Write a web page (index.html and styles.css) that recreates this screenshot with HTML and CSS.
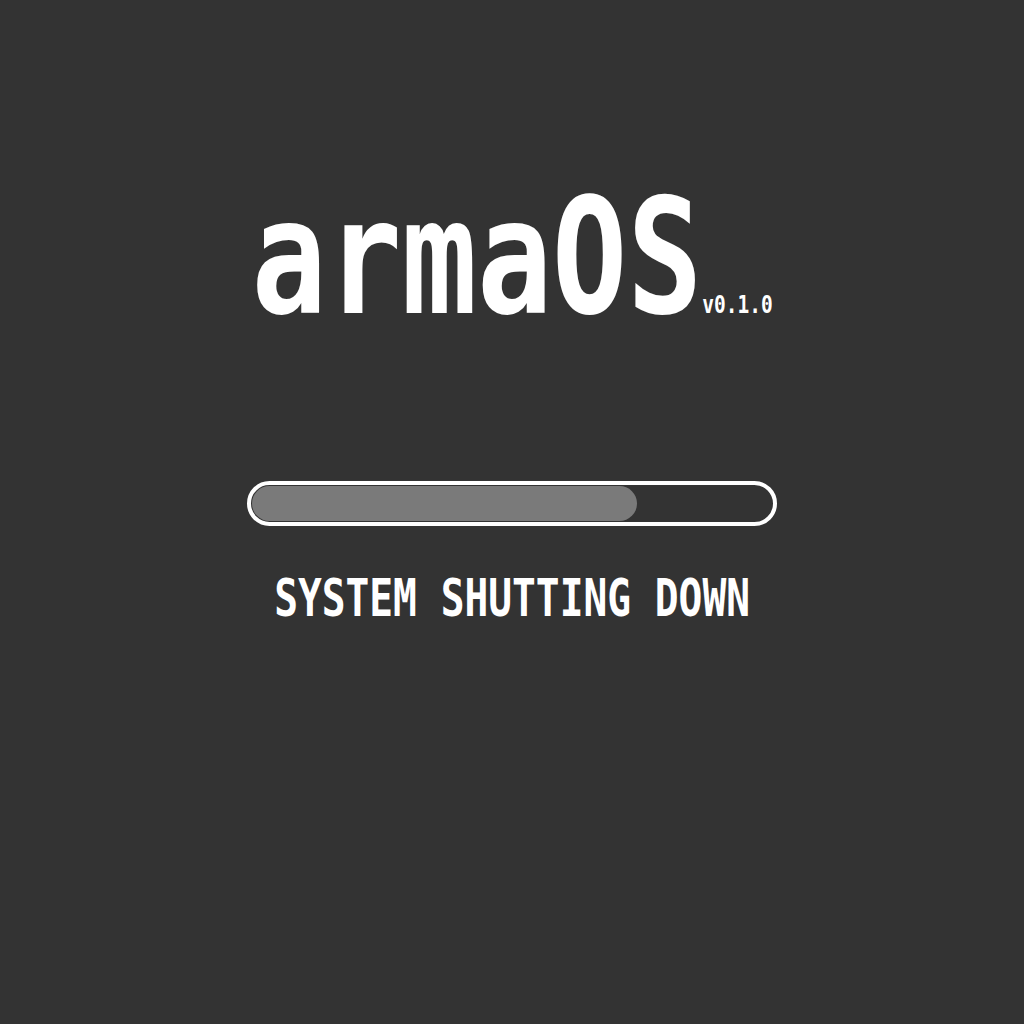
FILE: index.html
```html
<!DOCTYPE html>
<html>
<head>
<meta charset="utf-8">
<link rel="stylesheet" href="styles.css">
</head>
<body>
<main class="screen">
  <div class="title">
    <span class="name">armaOS</span><span class="version">v0.1.0</span>
  </div>
  <div class="bar">
    <div class="fill" style="width: 385px"></div>
  </div>
  <div class="status">SYSTEM SHUTTING DOWN</div>
</main>
</body>
</html>
```

FILE: styles.css
```css
html, body {
  margin: 0;
  padding: 0;
  background: #333333;
}
.screen {
  width: 1024px;
  height: 1024px;
  display: flex;
  flex-direction: column;
  align-items: center;
  padding-top: 178px;
  box-sizing: border-box;
  font-family: "DejaVu Sans Mono", monospace;
  font-weight: bold;
  color: #ffffff;
}
.title {
  display: flex;
  align-items: baseline;
  line-height: 1;
  transform: scaleX(0.78);
}
.name {
  font-size: 160px;
}
.version {
  font-size: 25px;
}
.bar {
  margin-top: 143px;
  width: 530px;
  height: 45px;
  box-sizing: border-box;
  border: 4px solid #ffffff;
  border-radius: 23px;
  padding: 1px;
  display: flex;
}
.fill {
  height: 35px;
  background: #7a7a7a;
  border-radius: 18px;
}
.status {
  margin-top: 46px;
  font-size: 52px;
  line-height: 1;
  transform: scaleX(0.76);
  white-space: nowrap;
}
```
